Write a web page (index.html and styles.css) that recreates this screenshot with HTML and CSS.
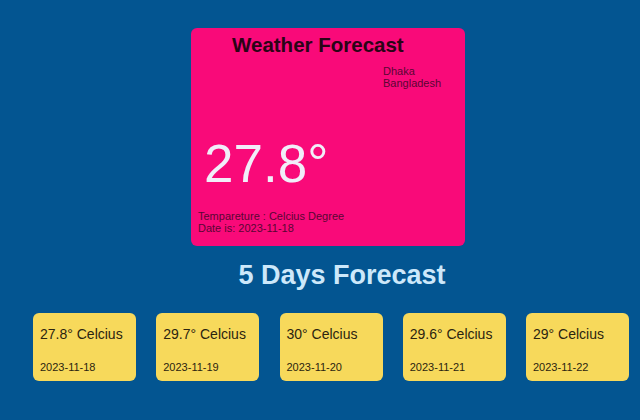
FILE: index.html
```html
<!DOCTYPE html>
<html lang="en">
<head>
<meta charset="utf-8">
<title>Weather Forecast</title>
<link rel="stylesheet" href="styles.css">
</head>
<body>
  <div class="page">
    <section class="today">
      <h1 class="today-title">Weather Forecast</h1>
      <div class="location">
        <div>Dhaka</div>
        <div>Bangladesh</div>
      </div>
      <div class="temp">27.8°</div>
      <div class="info">
        <div>Tempareture : Celcius Degree</div>
        <div>Date is: 2023-11-18</div>
      </div>
    </section>
    <h2 class="days-title">5 Days Forecast</h2>
    <div class="days">
      <div class="day"><div class="day-temp">27.8° Celcius</div><div class="day-date">2023-11-18</div></div>
      <div class="day"><div class="day-temp">29.7° Celcius</div><div class="day-date">2023-11-19</div></div>
      <div class="day"><div class="day-temp">30° Celcius</div><div class="day-date">2023-11-20</div></div>
      <div class="day"><div class="day-temp">29.6° Celcius</div><div class="day-date">2023-11-21</div></div>
      <div class="day"><div class="day-temp">29° Celcius</div><div class="day-date">2023-11-22</div></div>
    </div>
  </div>
</body>
</html>
```
FILE: styles.css
```css
html, body {
  margin: 0;
  padding: 0;
}
body {
  background: #035591;
  font-family: "Liberation Sans", Arial, sans-serif;
  width: 640px;
  height: 420px;
  overflow: hidden;
}
.page {
  padding-top: 28px;
}
.today {
  margin-left: 191px;
  width: 274px;
  height: 218px;
  box-sizing: border-box;
  background: #f90a79;
  border-radius: 6px;
  padding: 5px 0 12px 7px;
}
.today-title {
  margin: 0 0 0 34px;
  font-size: 20.5px;
  line-height: 24px;
  font-weight: bold;
  color: #2a0416;
}
.location {
  margin: 8px 0 0 185px;
  font-size: 11px;
  line-height: 12px;
  color: #5a0634;
}
.temp {
  margin: 44px 0 0 6px;
  font-size: 53px;
  line-height: 61px;
  color: #f1eef9;
}
.info {
  margin-top: 16px;
  font-size: 11px;
  line-height: 12px;
  color: #5a0634;
}
.days-title {
  margin: 14px 0 0 44px;
  text-align: center;
  font-size: 27px;
  line-height: 30px;
  font-weight: bold;
  color: #cde8fa;
}
.days {
  display: flex;
  gap: 20.25px;
  padding-left: 33px;
  margin-top: 23px;
}
.day {
  width: 103px;
  height: 68px;
  box-sizing: border-box;
  background: #f7d95b;
  border-radius: 6px;
  padding: 13px 0 0 7px;
  color: #2b2410;
}
.day-temp {
  font-size: 14px;
  line-height: 16px;
}
.day-date {
  margin-top: 19px;
  font-size: 11px;
  line-height: 12px;
}
```
